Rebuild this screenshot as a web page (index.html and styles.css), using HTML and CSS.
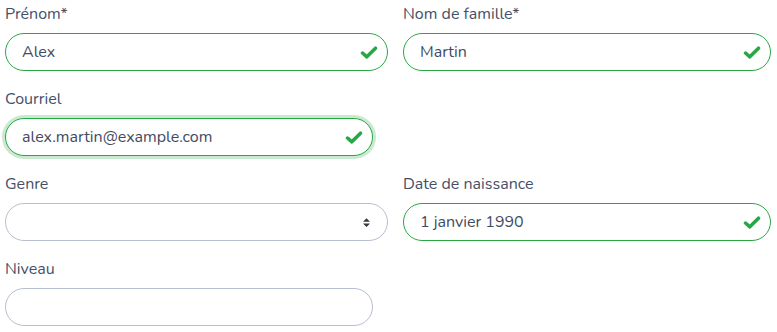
FILE: index.html
```html
<!DOCTYPE html>
<html lang="fr">
<head>
    <meta charset="UTF-8">
    <meta name="viewport" content="width=device-width, initial-scale=1.0">
    <title>Profil</title>
    <link rel="stylesheet" href="styles.css">
</head>
<body>
    <form class="form">
        <!-- Prénom -->
        <div class="form-group">
            <label class="label" for="prenom">Prénom*</label>
            <div class="field is-valid">
                <input class="input" id="prenom" type="text" value="Alex">
                <svg class="check" viewBox="0 0 16 12"><path d="M2 6.5L6 10L14 2"/></svg>
            </div>
        </div>

        <!-- Nom -->
        <div class="form-group">
            <label class="label" for="nom">Nom de famille*</label>
            <div class="field is-valid">
                <input class="input" id="nom" type="text" value="Martin">
                <svg class="check" viewBox="0 0 16 12"><path d="M2 6.5L6 10L14 2"/></svg>
            </div>
        </div>

        <!-- Courriel -->
        <div class="form-group">
            <label class="label" for="courriel">Courriel</label>
            <div class="field narrow is-valid is-focused">
                <input class="input" id="courriel" type="email" value="alex.martin@example.com">
                <svg class="check" viewBox="0 0 16 12"><path d="M2 6.5L6 10L14 2"/></svg>
            </div>
        </div>
        <div class="form-group"></div>

        <!-- Genre -->
        <div class="form-group">
            <label class="label" for="genre">Genre</label>
            <div class="field">
                <select class="input select" id="genre">
                    <option value=""></option>
                    <option>Femme</option>
                    <option>Homme</option>
                    <option>Autre</option>
                </select>
                <svg class="arrows" viewBox="0 0 4 5"><path d="M2 0L0 2h4zm0 5L0 3h4z"/></svg>
            </div>
        </div>

        <!-- Date de naissance -->
        <div class="form-group">
            <label class="label" for="naissance">Date de naissance</label>
            <div class="field is-valid">
                <input class="input" id="naissance" type="text" value="1 janvier 1990">
                <svg class="check" viewBox="0 0 16 12"><path d="M2 6.5L6 10L14 2"/></svg>
            </div>
        </div>

        <!-- Niveau -->
        <div class="form-group">
            <label class="label" for="niveau">Niveau</label>
            <div class="field narrow">
                <input class="input" id="niveau" type="text" value="">
            </div>
        </div>
    </form>
</body>
</html>
```

FILE: styles.css
```css
body {
    font-family: 'Nunito', 'Lato', 'Open Sans', sans-serif;
    background-color: #ffffff;
    color: #3f4b61;
    margin: 0;
    padding: 0;
}

.form {
    display: grid;
    grid-template-columns: 383px 368px;
    column-gap: 15px;
    row-gap: 16px;
    padding: 2px 6px 0 5px;
}

.label {
    display: block;
    font-size: 16px;
    line-height: 24px;
    margin: 0 0 7px 0;
    color: #44506a;
}

.field {
    position: relative;
    height: 38px;
}

.field.narrow {
    width: 368px;
}

.input {
    width: 100%;
    height: 38px;
    box-sizing: border-box;
    border: 1px solid #b7bed0;
    border-radius: 19px;
    padding: 0 40px 0 16px;
    font-family: inherit;
    font-size: 16px;
    color: #3f4b61;
    background-color: #ffffff;
    outline: none;
}

.select {
    appearance: none;
    -webkit-appearance: none;
}

.is-valid .input {
    border-color: #28a745;
}

.is-focused .input {
    box-shadow: 0 0 0 3px rgba(40, 167, 69, 0.25);
}

.check {
    position: absolute;
    right: 10px;
    top: 13px;
    width: 18px;
    height: 13px;
    fill: none;
    stroke: #28a745;
    stroke-width: 3.2;
    stroke-linecap: round;
    stroke-linejoin: round;
}

.arrows {
    position: absolute;
    right: 18px;
    top: 15px;
    width: 7px;
    height: 9px;
    fill: #343a40;
    pointer-events: none;
}
```
